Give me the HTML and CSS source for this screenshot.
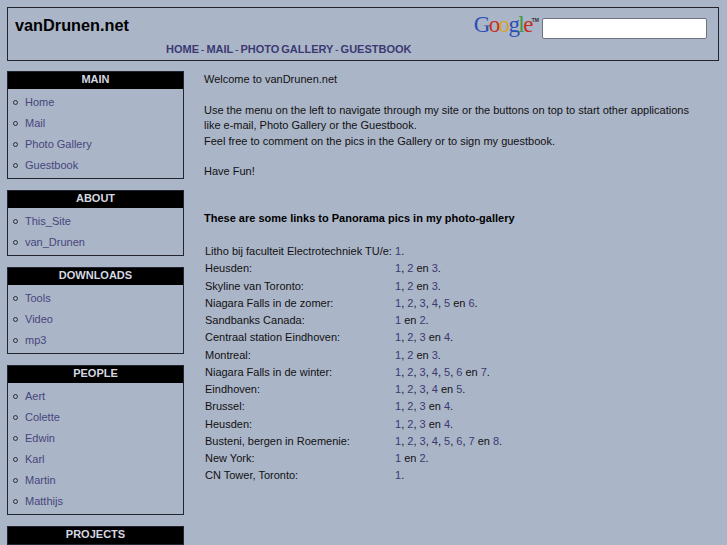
FILE: index.html
```html
<!DOCTYPE html>
<html lang="en">
<head>
    <meta charset="UTF-8">
    <title>vanDrunen.net</title>
    <link rel="stylesheet" href="styles.css">
</head>
<body>
    <div class="header">
        <div class="header-top">
            <div class="site-title">vanDrunen.net</div>
            <div class="search">
                <div class="google-logo"><span class="g-blue">G</span><span class="g-red">o</span><span class="g-yellow">o</span><span class="g-blue">g</span><span class="g-green">l</span><span class="g-red">e</span><span class="g-tm">TM</span></div>
                <input type="text" class="search-input">
            </div>
        </div>
        <div class="top-nav">
            <a href="#">HOME</a> <span class="sep">-</span> <a href="#">MAIL</a> <span class="sep">-</span> <a href="#">PHOTO GALLERY</a> <span class="sep">-</span> <a href="#">GUESTBOOK</a>
        </div>
    </div>
    <div class="page">
        <div class="sidebar">
            <div class="menu">
                <div class="menu-title">MAIN</div>
                <ul>
                    <li><a href="#">Home</a></li>
                    <li><a href="#">Mail</a></li>
                    <li><a href="#">Photo Gallery</a></li>
                    <li><a href="#">Guestbook</a></li>
                </ul>
            </div>
            <div class="menu">
                <div class="menu-title">ABOUT</div>
                <ul>
                    <li><a href="#">This_Site</a></li>
                    <li><a href="#">van_Drunen</a></li>
                </ul>
            </div>
            <div class="menu">
                <div class="menu-title">DOWNLOADS</div>
                <ul>
                    <li><a href="#">Tools</a></li>
                    <li><a href="#">Video</a></li>
                    <li><a href="#">mp3</a></li>
                </ul>
            </div>
            <div class="menu">
                <div class="menu-title">PEOPLE</div>
                <ul>
                    <li><a href="#">Aert</a></li>
                    <li><a href="#">Colette</a></li>
                    <li><a href="#">Edwin</a></li>
                    <li><a href="#">Karl</a></li>
                    <li><a href="#">Martin</a></li>
                    <li><a href="#">Matthijs</a></li>
                </ul>
            </div>
            <div class="menu">
                <div class="menu-title">PROJECTS</div>
            </div>
        </div>
        <div class="content">
            <p>Welcome to vanDrunen.net</p>
            <p>Use the menu on the left to navigate through my site or the buttons on top to start other applications<br>
            like e-mail, Photo Gallery or the Guestbook.<br>
            Feel free to comment on the pics in the Gallery or to sign my guestbook.</p>
            <p>Have Fun!</p>
            <p class="links-title">These are some links to Panorama pics in my photo-gallery</p>
            <div class="links">
                <div>Litho bij faculteit Electrotechniek TU/e:</div><div><a href="#">1</a>.</div>
                <div>Heusden:</div><div><a href="#">1</a>, <a href="#">2</a> en <a href="#">3</a>.</div>
                <div>Skyline van Toronto:</div><div><a href="#">1</a>, <a href="#">2</a> en <a href="#">3</a>.</div>
                <div>Niagara Falls in de zomer:</div><div><a href="#">1</a>, <a href="#">2</a>, <a href="#">3</a>, <a href="#">4</a>, <a href="#">5</a> en <a href="#">6</a>.</div>
                <div>Sandbanks Canada:</div><div><a href="#">1</a> en <a href="#">2</a>.</div>
                <div>Centraal station Eindhoven:</div><div><a href="#">1</a>, <a href="#">2</a>, <a href="#">3</a> en <a href="#">4</a>.</div>
                <div>Montreal:</div><div><a href="#">1</a>, <a href="#">2</a> en <a href="#">3</a>.</div>
                <div>Niagara Falls in de winter:</div><div><a href="#">1</a>, <a href="#">2</a>, <a href="#">3</a>, <a href="#">4</a>, <a href="#">5</a>, <a href="#">6</a> en <a href="#">7</a>.</div>
                <div>Eindhoven:</div><div><a href="#">1</a>, <a href="#">2</a>, <a href="#">3</a>, <a href="#">4</a> en <a href="#">5</a>.</div>
                <div>Brussel:</div><div><a href="#">1</a>, <a href="#">2</a>, <a href="#">3</a> en <a href="#">4</a>.</div>
                <div>Heusden:</div><div><a href="#">1</a>, <a href="#">2</a>, <a href="#">3</a> en <a href="#">4</a>.</div>
                <div>Busteni, bergen in Roemenie:</div><div><a href="#">1</a>, <a href="#">2</a>, <a href="#">3</a>, <a href="#">4</a>, <a href="#">5</a>, <a href="#">6</a>, <a href="#">7</a> en <a href="#">8</a>.</div>
                <div>New York:</div><div><a href="#">1</a> en <a href="#">2</a>.</div>
                <div>CN Tower, Toronto:</div><div><a href="#">1</a>.</div>
            </div>
        </div>
    </div>
</body>
</html>
```

FILE: styles.css
```css
html {
    height: 100%;
    overflow: hidden;
}
body {
    margin: 0;
    padding: 7px 8px 0 7px;
    background-color: #abb5c8;
    color: #111;
    font-family: "Liberation Sans", Arial, sans-serif;
    font-size: 11px;
}
a {
    color: #3a3a72;
    text-decoration: none;
}
.header {
    height: 52px;
    border: 1px solid #22252e;
    padding: 0 11px 0 7px;
}
.header-top {
    display: flex;
    justify-content: space-between;
    height: 35px;
}
.site-title {
    padding-top: 8px;
    font-size: 16.3px;
    font-weight: bold;
    color: #000;
}
.search {
    display: flex;
    align-items: flex-start;
    gap: 3px;
}
.google-logo {
    font-family: "Liberation Serif", serif;
    font-size: 23px;
    line-height: 34px;
    letter-spacing: -1.6px;
}
.g-blue { color: #2a4fb5; }
.g-red { color: #c5301f; }
.g-yellow { color: #d8a62a; }
.g-green { color: #3f9a42; }
.g-tm {
    font-family: "Liberation Sans", sans-serif;
    font-size: 5px;
    font-weight: bold;
    line-height: 0;
    letter-spacing: 0;
    vertical-align: 10px;
    color: #333;
}
.search-input {
    box-sizing: border-box;
    width: 165px;
    height: 21px;
    margin: 10px 0 0;
    border: 1px solid #6e7380;
    border-radius: 2px;
    background-color: #fff;
}
.top-nav {
    padding-left: 151px;
    font-size: 11px;
    font-weight: bold;
    line-height: 13px;
    word-spacing: -1.2px;
}
.top-nav .sep {
    font-weight: normal;
    color: #3a3a72;
}
.page {
    display: flex;
    margin-top: 10px;
}
.sidebar {
    width: 177px;
    flex-shrink: 0;
}
.menu {
    border: 1px solid #22252e;
    margin-bottom: 11px;
}
.menu-title {
    height: 17px;
    background-color: #000;
    color: #d5d8e0;
    font-size: 11px;
    font-weight: bold;
    line-height: 15px;
    text-align: center;
}
.menu ul {
    margin: 0;
    padding: 3px 0 2px 17px;
    list-style: none;
}
.menu li {
    position: relative;
    height: 21px;
    line-height: 21px;
}
.menu li::before {
    content: "";
    position: absolute;
    left: -12px;
    top: 8px;
    width: 3px;
    height: 3px;
    border: 1px solid #2c2f3a;
    border-radius: 50%;
}
.menu li a {
    color: #46467a;
}
.content {
    margin-left: 20px;
    padding-top: 1px;
    line-height: 15.4px;
}
.content p {
    margin: 0 0 15.4px;
}
.content .links-title {
    margin: 31px 0 17px;
    font-weight: bold;
    color: #000;
}
.links {
    display: grid;
    grid-template-columns: 190px auto;
    grid-auto-rows: 17.25px;
    padding-left: 1px;
    line-height: 17.25px;
}
```
